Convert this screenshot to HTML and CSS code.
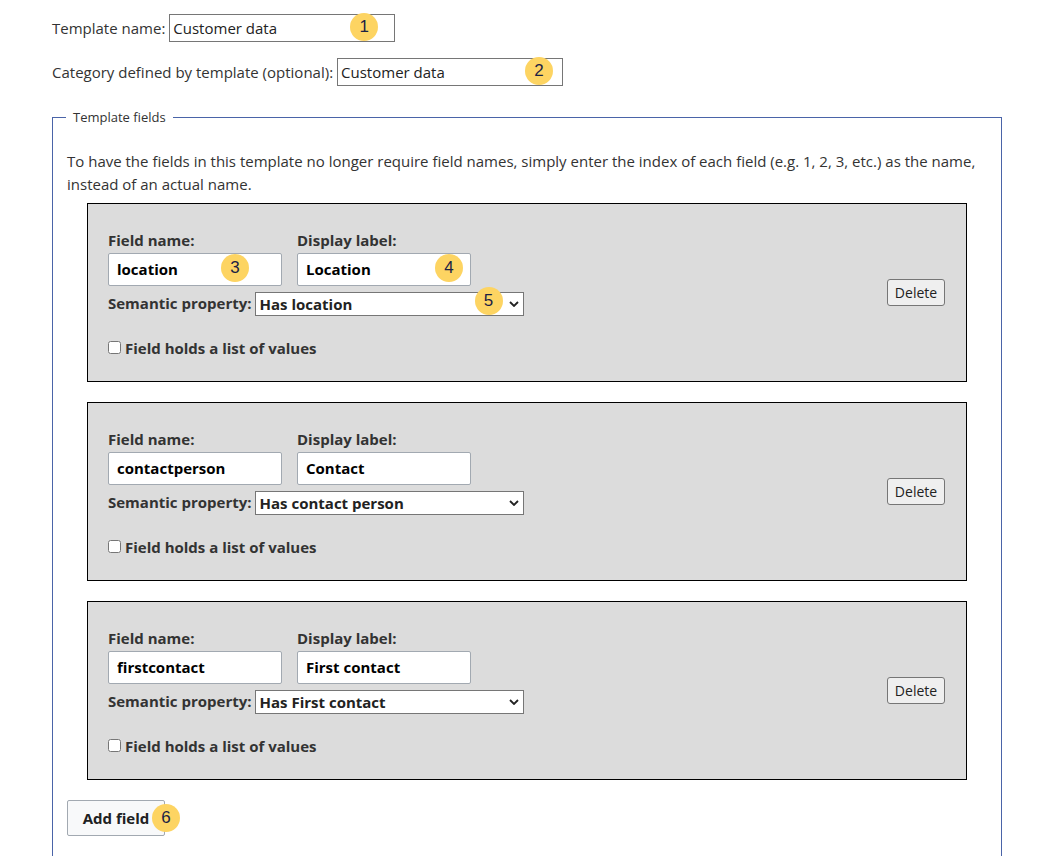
FILE: index.html
```html
<!DOCTYPE html>
<html>
<head>
<meta charset="utf-8">
<link rel="stylesheet" href="styles.css">
</head>
<body>
<div class="page">
  <div class="row">
    <label class="top-label">Template name:</label>
    <span class="anchor">
      <input class="top-input" type="text" value="Customer data">
      <span class="badge b1">1</span>
    </span>
  </div>
  <div class="row">
    <label class="top-label">Category defined by template (optional):</label>
    <span class="anchor">
      <input class="top-input" type="text" value="Customer data">
      <span class="badge b2">2</span>
    </span>
  </div>

  <fieldset class="fields">
    <legend>Template fields</legend>
    <p class="intro">To have the fields in this template no longer require field names, simply enter the index of each field (e.g. 1, 2, 3, etc.) as the name, instead of an actual name.</p>

    <div class="field-box">
      <div class="field-main">
        <div class="name-row">
          <div class="group">
            <label class="flabel">Field name:</label>
            <span class="anchor">
              <input class="finput" type="text" value="location">
              <span class="badge b3">3</span>
            </span>
          </div>
          <div class="group">
            <label class="flabel">Display label:</label>
            <span class="anchor">
              <input class="finput" type="text" value="Location">
              <span class="badge b4">4</span>
            </span>
          </div>
        </div>
        <div class="prop-row">
          <label class="flabel inline">Semantic property:</label>
          <span class="anchor">
            <select class="fselect"><option>Has location</option></select>
            <svg class="chev" width="10" height="6" viewBox="0 0 10 6"><path d="M1 1 L5 5 L9 1" fill="none" stroke="#222" stroke-width="1.8"/></svg>
            <span class="badge b5">5</span>
          </span>
        </div>
        <label class="check-row"><input type="checkbox" class="cb"> Field holds a list of values</label>
      </div>
      <button class="delete">Delete</button>
    </div>

    <div class="field-box">
      <div class="field-main">
        <div class="name-row">
          <div class="group">
            <label class="flabel">Field name:</label>
            <span class="anchor"><input class="finput" type="text" value="contactperson"></span>
          </div>
          <div class="group">
            <label class="flabel">Display label:</label>
            <span class="anchor"><input class="finput" type="text" value="Contact"></span>
          </div>
        </div>
        <div class="prop-row">
          <label class="flabel inline">Semantic property:</label>
          <span class="anchor">
            <select class="fselect"><option>Has contact person</option></select>
            <svg class="chev" width="10" height="6" viewBox="0 0 10 6"><path d="M1 1 L5 5 L9 1" fill="none" stroke="#222" stroke-width="1.8"/></svg>
          </span>
        </div>
        <label class="check-row"><input type="checkbox" class="cb"> Field holds a list of values</label>
      </div>
      <button class="delete">Delete</button>
    </div>

    <div class="field-box">
      <div class="field-main">
        <div class="name-row">
          <div class="group">
            <label class="flabel">Field name:</label>
            <span class="anchor"><input class="finput" type="text" value="firstcontact"></span>
          </div>
          <div class="group">
            <label class="flabel">Display label:</label>
            <span class="anchor"><input class="finput" type="text" value="First contact"></span>
          </div>
        </div>
        <div class="prop-row">
          <label class="flabel inline">Semantic property:</label>
          <span class="anchor">
            <select class="fselect"><option>Has First contact</option></select>
            <svg class="chev" width="10" height="6" viewBox="0 0 10 6"><path d="M1 1 L5 5 L9 1" fill="none" stroke="#222" stroke-width="1.8"/></svg>
          </span>
        </div>
        <label class="check-row"><input type="checkbox" class="cb"> Field holds a list of values</label>
      </div>
      <button class="delete">Delete</button>
    </div>

    <div class="add-row">
      <span class="anchor">
        <button class="add">Add field</button>
        <span class="badge b6">6</span>
      </span>
    </div>
  </fieldset>
</div>
</body>
</html>
```

FILE: styles.css
```css
html, body {
  margin: 0;
  padding: 0;
  background: #ffffff;
}
body {
  font-family: "Open Sans", "Liberation Sans", sans-serif;
  font-size: 15px;
  color: #333333;
}
.page {
  padding: 14px 0 0 52px;
}
.row {
  display: flex;
  align-items: center;
  height: 28px;
  margin-bottom: 16px;
}
.top-label {
  margin-right: 4px;
}
.anchor {
  position: relative;
  display: inline-block;
}
.top-input {
  box-sizing: border-box;
  width: 226px;
  height: 28px;
  border: 1px solid #767676;
  border-radius: 0;
  padding: 0 3px;
  font-family: inherit;
  font-size: 15px;
  color: #222;
  display: block;
}
.badge {
  position: absolute;
  width: 28px;
  height: 28px;
  border-radius: 50%;
  background: #fdd462;
  color: #1b2245;
  font-family: "Liberation Sans", Arial, sans-serif;
  font-size: 17px;
  line-height: 28px;
  text-align: center;
  pointer-events: none;
}
.b1 { left: 181px; top: -1px; }
.b2 { left: 188px; top: -1px; }
.b3 { left: 113px; top: 3px; }
.b4 { left: 138px; top: 3px; }
.b5 { left: 220px; top: -5px; }
.b6 { left: 85px; top: 4px; }

.fields {
  box-sizing: border-box;
  width: 950px;
  margin: 23px 0 0 0;
  border: 1px solid #4a64a8;
  border-bottom: none;
  padding: 0 14px 20px 14px;
  min-height: 760px;
}
.fields legend {
  font-size: 13px;
  color: #333;
  padding: 0 7px;
  margin-left: -1px;
  line-height: 16px;
}
.intro {
  margin: 25px 0 7px 0;
  line-height: 23px;
  font-size: 15px;
}
.field-box {
  box-sizing: border-box;
  width: 880px;
  height: 179px;
  margin: 0 0 20px 20px;
  background: #dcdcdc;
  border: 1px solid #000;
  display: flex;
  align-items: center;
  justify-content: space-between;
  padding: 0 21px 0 20px;
}
.field-main {
  display: flex;
  flex-direction: column;
  padding-top: 2px;
}
.name-row {
  display: flex;
  gap: 15px;
}
.group {
  display: flex;
  flex-direction: column;
}
.flabel {
  font-weight: bold;
  font-size: 15px;
  line-height: 21px;
  color: #333;
}
.finput {
  box-sizing: border-box;
  display: block;
  width: 174px;
  height: 33px;
  margin-top: 2px;
  border: 1px solid #a2a9b1;
  border-radius: 2px;
  padding: 0 8px;
  font-family: inherit;
  font-size: 15px;
  font-weight: bold;
  color: #000;
  background: #fff;
}
.prop-row {
  display: flex;
  align-items: center;
  margin-top: 6px;
}
.flabel.inline {
  margin-right: 3px;
}
.fselect {
  box-sizing: border-box;
  display: block;
  width: 269px;
  height: 24px;
  border: 1px solid #767676;
  border-radius: 0;
  padding: 0 4px;
  font-family: inherit;
  font-size: 15px;
  font-weight: bold;
  color: #222;
  background: #fff;
  appearance: none;
  -webkit-appearance: none;
}
.chev {
  position: absolute;
  right: 5px;
  top: 9px;
  pointer-events: none;
}
.check-row {
  display: flex;
  align-items: center;
  margin-top: 22px;
  font-weight: bold;
  font-size: 15px;
  line-height: 20px;
  color: #333;
}
.cb {
  width: 13px;
  height: 13px;
  margin: 0 4px 0 0;
}
.delete {
  font-family: inherit;
  font-size: 14px;
  color: #222;
  background: #efefef;
  border: 1px solid #767676;
  border-radius: 3px;
  height: 27px;
  width: 58px;
  padding: 0;
}
.add-row {
  margin-top: 0;
}
.add {
  box-sizing: border-box;
  height: 36px;
  width: 98px;
  padding: 0;
  font-family: inherit;
  font-size: 15px;
  font-weight: bold;
  color: #202122;
  background: #f8f9fa;
  border: 1px solid #a2a9b1;
  border-radius: 2px;
  display: block;
}
```
